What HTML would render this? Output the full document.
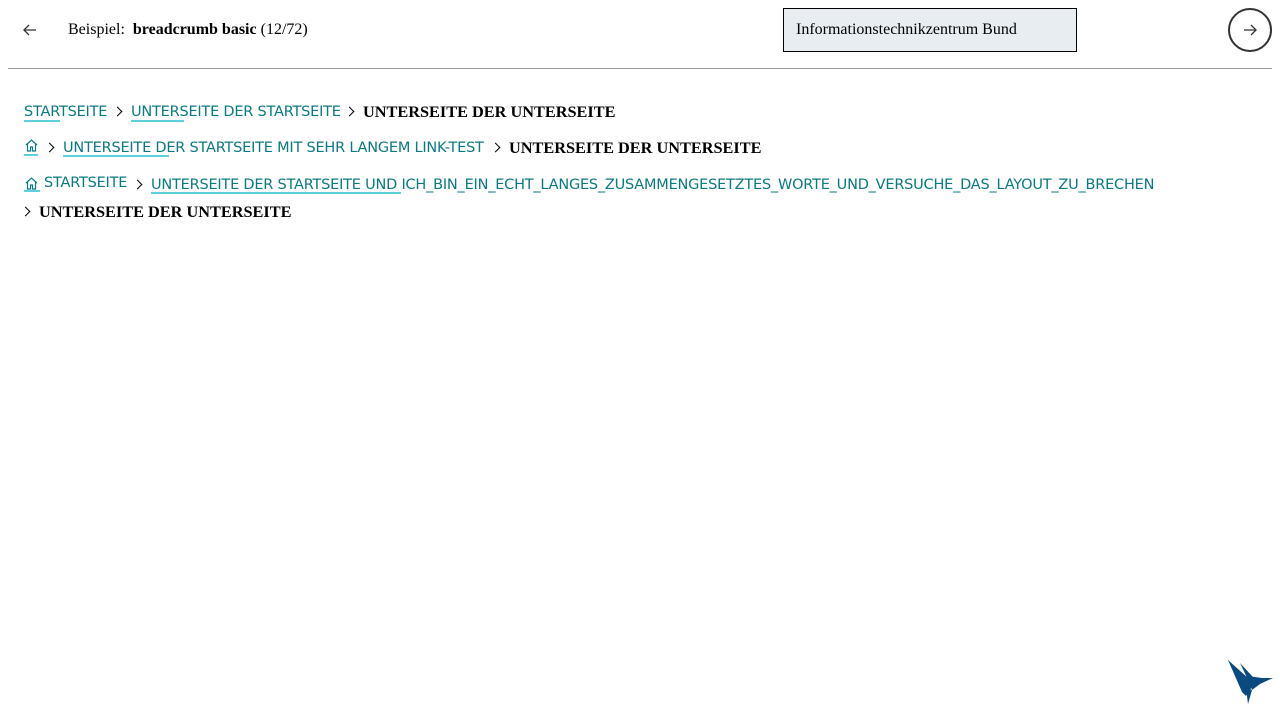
<!DOCTYPE html>
<html><head><meta charset="utf-8"><style>
body{margin:0;width:1280px;height:720px;background:#fff;position:relative;font-family:"Liberation Serif",serif;overflow:hidden}
.top{position:absolute;left:0;top:0;width:1280px;height:68px}
.hr{position:absolute;left:8px;top:68px;width:1264px;height:1px;background:#999}
.t{position:absolute;white-space:nowrap}
.l{color:#0a7a82;font-family:"DejaVu Sans","Liberation Sans",sans-serif;font-size:14.5px;letter-spacing:-0.22px;position:absolute;white-space:nowrap}
.u{position:absolute;height:2px;background:#5fd0e0}
.b{position:absolute;font-weight:bold;font-size:16.3px;white-space:nowrap}
.ch{position:absolute;width:6px;height:6px;border-right:1.6px solid #000;border-top:1.6px solid #000;transform:rotate(45deg)}
</style></head><body>
<div class="top">
<svg style="position:absolute;left:22px;top:23px" width="16" height="14"><path d="M14 7H2M7 2L2 7l5 5" stroke="#333" stroke-width="1.3" fill="none"/></svg>
<div class="t" style="left:68px;top:21px;font-size:16px">Beispiel:&nbsp; <b>breadcrumb basic</b> (12/72)</div>
<div class="t" style="left:783px;top:8px;background:#e8edf1;border:1px solid #000;font-size:16px;line-height:42px;padding-left:12px;box-sizing:border-box;width:294px;height:44px">Informationstechnikzentrum Bund</div>
<div style="position:absolute;left:1228px;top:8px;width:40px;height:40px;border:2px solid #333;border-radius:50%"></div>
<svg style="position:absolute;left:1242px;top:23px" width="16" height="14"><path d="M2 7h12M9 2l5 5-5 5" stroke="#333" stroke-width="1.3" fill="none"/></svg>
</div>
<div class="hr"></div>

<div class="l" style="left:24px;top:104px">STARTSEITE</div><div class="u" style="left:24px;top:120px;width:36px"></div>
<div class="ch" style="left:114px;top:108px"></div>
<div class="l" style="left:131px;top:104px">UNTERSEITE DER STARTSEITE</div><div class="u" style="left:131px;top:120px;width:53px"></div>
<div class="ch" style="left:346px;top:108px"></div>
<div class="b" style="left:363px;top:102px">UNTERSEITE DER UNTERSEITE</div>

<svg style="position:absolute;left:24px;top:138px" width="15" height="14"><path d="M2 7L7.5 2 13 7M3.5 6v7h3v-4h2v4h3V6" stroke="#0a7a82" stroke-width="1.2" fill="none"/></svg>
<div class="u" style="left:24px;top:154px;width:14px"></div>
<div class="ch" style="left:46px;top:144px"></div>
<div class="l" style="left:63px;top:140px">UNTERSEITE DER STARTSEITE MIT SEHR LANGEM LINK-TEST</div><div class="u" style="left:63px;top:155px;width:106px"></div>
<div class="ch" style="left:492px;top:144px"></div>
<div class="b" style="left:509px;top:138px">UNTERSEITE DER UNTERSEITE</div>

<svg style="position:absolute;left:24px;top:176px" width="15" height="14"><path d="M2 7L7.5 2 13 7M3.5 6v7h3v-4h2v4h3V6" stroke="#0a7a82" stroke-width="1.2" fill="none"/></svg>
<div class="l" style="left:44px;top:175px">STARTSEITE</div><div class="u" style="left:24px;top:190px;width:16px"></div>
<div class="ch" style="left:134px;top:181px"></div>
<div class="l" style="left:151px;top:177px">UNTERSEITE DER STARTSEITE UND ICH_BIN_EIN_ECHT_LANGES_ZUSAMMENGESETZTES_WORTE_UND_VERSUCHE_DAS_LAYOUT_ZU_BRECHEN</div><div class="u" style="left:151px;top:192px;width:250px"></div>
<div class="ch" style="left:22px;top:208px"></div>
<div class="b" style="left:39px;top:202px">UNTERSEITE DER UNTERSEITE</div>

<svg style="position:absolute;left:1226px;top:658px" width="50" height="50"><path d="M2 2L22 20 28 26 20 38 16 34z" fill="#0b4a80"/><path d="M14 5L26 18 30 24 24 26z" fill="#0b4a80"/><path d="M22 18L36 20 47 20 34 26 26 32z" fill="#0b4a80"/><path d="M20 30L22 46 26 32z" fill="#0b4a80"/></svg>
</body></html>
